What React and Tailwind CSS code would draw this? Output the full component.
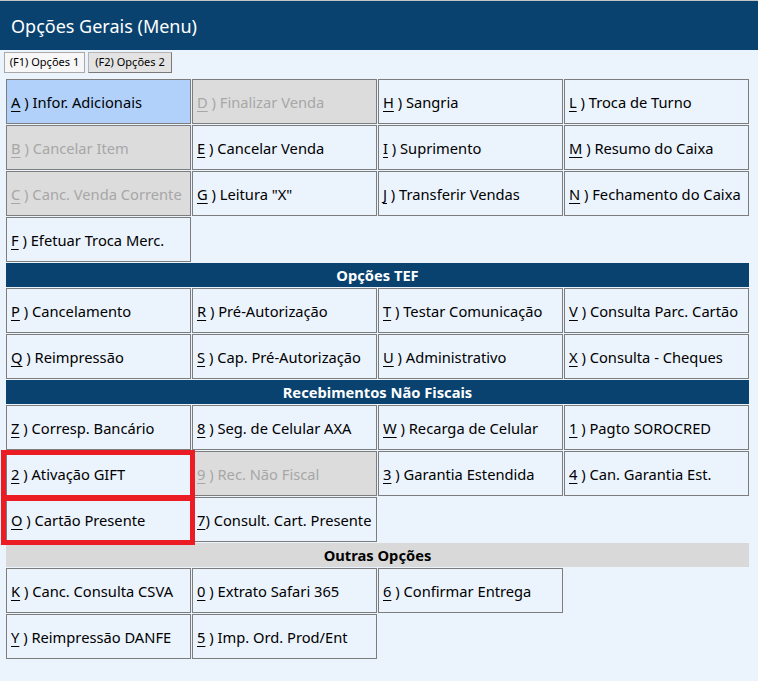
import React from "react";

const FONT = { fontFamily: '"Noto Sans", "Open Sans", sans-serif' };

function Cell({ k, label, nospace, state, red }) {
  if (!k) return <div className="h-[45px]" />;
  const base =
    state === "sel"
      ? "bg-[#b1d1fb] text-black"
      : state === "dis"
      ? "bg-[#dcdcdc] text-[#a7a7a7]"
      : "bg-[#ebf3fd] text-black";
  return (
    <div
      className={`relative h-[45px] border border-[#7d7d7d] flex items-center pl-[4px] pt-[2px] text-[14.7px] whitespace-nowrap overflow-visible ${base}`}
    >
      <span>
        <span className="underline underline-offset-[3px] decoration-1">{k}</span>
        {nospace ? ")" : " )"} {label}
      </span>
      {red && (
        <div
          className={`absolute z-10 border-[5px] border-[#ec1c24] left-[-6px] right-[-5px] top-[-2px] ${
            red === 1 ? "bottom-[-5px]" : "bottom-[-4px]"
          }`}
        />
      )}
    </div>
  );
}

function Bar({ children, light }) {
  return (
    <div
      className={`col-span-4 h-[24px] flex items-center justify-center pt-[1px] font-bold text-[14.7px] ${
        light ? "bg-[#d9d9d9] text-black" : "bg-[#0a426f] text-white"
      }`}
    >
      {children}
    </div>
  );
}

const sections = [
  {
    rows: [
      [
        { k: "A", label: "Infor. Adicionais", state: "sel" },
        { k: "D", label: "Finalizar Venda", state: "dis" },
        { k: "H", label: "Sangria" },
        { k: "L", label: "Troca de Turno" },
      ],
      [
        { k: "B", label: "Cancelar Item", state: "dis" },
        { k: "E", label: "Cancelar Venda" },
        { k: "I", label: "Suprimento" },
        { k: "M", label: "Resumo do Caixa" },
      ],
      [
        { k: "C", label: "Canc. Venda Corrente", state: "dis" },
        { k: "G", label: 'Leitura "X"' },
        { k: "J", label: "Transferir Vendas" },
        { k: "N", label: "Fechamento do Caixa" },
      ],
      [{ k: "F", label: "Efetuar Troca Merc." }, {}, {}, {}],
    ],
  },
  {
    bar: "Opções TEF",
    rows: [
      [
        { k: "P", label: "Cancelamento" },
        { k: "R", label: "Pré-Autorização" },
        { k: "T", label: "Testar Comunicação" },
        { k: "V", label: "Consulta Parc. Cartão" },
      ],
      [
        { k: "Q", label: "Reimpressão" },
        { k: "S", label: "Cap. Pré-Autorização" },
        { k: "U", label: "Administrativo" },
        { k: "X", label: "Consulta - Cheques" },
      ],
    ],
  },
  {
    bar: "Recebimentos Não Fiscais",
    rows: [
      [
        { k: "Z", label: "Corresp. Bancário" },
        { k: "8", label: "Seg. de Celular AXA" },
        { k: "W", label: "Recarga de Celular" },
        { k: "1", label: "Pagto SOROCRED" },
      ],
      [
        { k: "2", label: "Ativação GIFT", red: 1 },
        { k: "9", label: "Rec. Não Fiscal", state: "dis" },
        { k: "3", label: "Garantia Estendida" },
        { k: "4", label: "Can. Garantia Est." },
      ],
      [
        { k: "O", label: "Cartão Presente", red: 2 },
        { k: "7", label: "Consult. Cart. Presente", nospace: true },
        {},
        {},
      ],
    ],
  },
  {
    bar: "Outras Opções",
    light: true,
    rows: [
      [
        { k: "K", label: "Canc. Consulta CSVA" },
        { k: "0", label: "Extrato Safari 365" },
        { k: "6", label: "Confirmar Entrega" },
        {},
      ],
      [
        { k: "Y", label: "Reimpressão DANFE" },
        { k: "5", label: "Imp. Ord. Prod/Ent" },
        {},
        {},
      ],
    ],
  },
];

export default function App() {
  return (
    <div className="w-[758px] h-[681px] bg-[#ebf3fd] overflow-hidden" style={FONT}>
      <div className="border-t border-[#c4c4c4] bg-[#0a426f] h-[50px] flex items-center pl-[11px] pt-[2px]">
        <span className="text-white text-[18px]">Opções Gerais (Menu)</span>
      </div>
      <div className="flex gap-[3px] pl-[4px] pt-[2px] h-[29px]">
        <div className="h-[21px] w-[81px] bg-[#f7f7f7] border border-[#a9a9a9] flex items-center justify-center text-[11px] text-black">
          (F1) Opções 1
        </div>
        <div className="h-[21px] w-[84px] bg-[#e3e3e3] border border-[#b5b5b5] border-r-[#7a7a7a] border-b-[#7a7a7a] flex items-center justify-center text-[11px] text-black">
          (F2) Opções 2
        </div>
      </div>
      <div className="px-[6px]">
        <div className="grid grid-cols-[185px_185px_185px_185px] gap-[1px] w-[744px]">
          {sections.map((s, si) => (
            <React.Fragment key={si}>
              {s.bar && <Bar light={s.light}>{s.bar}</Bar>}
              {s.rows.map((r, ri) =>
                r.map((c, ci) => <Cell key={`${si}-${ri}-${ci}`} {...c} />)
              )}
            </React.Fragment>
          ))}
        </div>
      </div>
    </div>
  );
}
